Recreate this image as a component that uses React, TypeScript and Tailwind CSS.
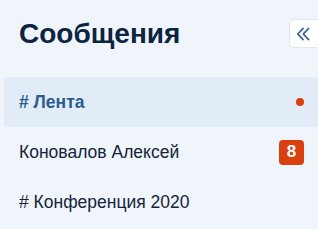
import React from "react";

const ROWS = [
  { label: "# Лента", active: true, dot: true },
  { label: "Коновалов Алексей", badge: 8 },
  { label: "# Конференция 2020" },
];

export default function App() {
  return (
    <div className="w-[318px] h-[229px] overflow-hidden bg-[#f0f5fc] font-['Liberation_Sans',Arial,sans-serif]">
      <div className="flex items-center justify-between h-[66px] pl-[19px] pt-[1px]">
        <h1 className="text-[28px] font-bold text-[#0c2442] leading-none">Сообщения</h1>
        <button className="w-[34px] h-[29px] -mr-[5px] flex items-center pl-[6px] bg-white border border-[#e1e8f1] rounded-[4px] text-[#2b5f95]">
          <svg width="14" height="14" viewBox="0 0 14 14" fill="none" stroke="currentColor" strokeWidth="1.8" strokeLinecap="round" strokeLinejoin="round">
            <path d="M7 1.5 1.8 7 7 12.5" />
            <path d="M12.5 1.5 7.3 7 12.5 12.5" />
          </svg>
        </button>
      </div>
      <div className="pl-[4px] mt-[11px]">
        {ROWS.map((r) => (
          <div
            key={r.label}
            className={`flex items-center justify-between h-[50px] pl-[15px] pr-[14px] ${r.active ? "bg-[#e2ecf6]" : ""}`}
          >
            <span className={`text-[17.5px] ${r.active ? "font-bold text-[#2c5b8e]" : "text-[#15243a]"}`}>{r.label}</span>
            {r.dot && <span className="w-[8px] h-[8px] rounded-full bg-[#d8400f]" />}
            {r.badge && (
              <span className="w-[25px] h-[25px] rounded-[4px] bg-[#d8400f] text-white text-[17px] font-bold flex items-center justify-center">
                {r.badge}
              </span>
            )}
          </div>
        ))}
      </div>
    </div>
  );
}
